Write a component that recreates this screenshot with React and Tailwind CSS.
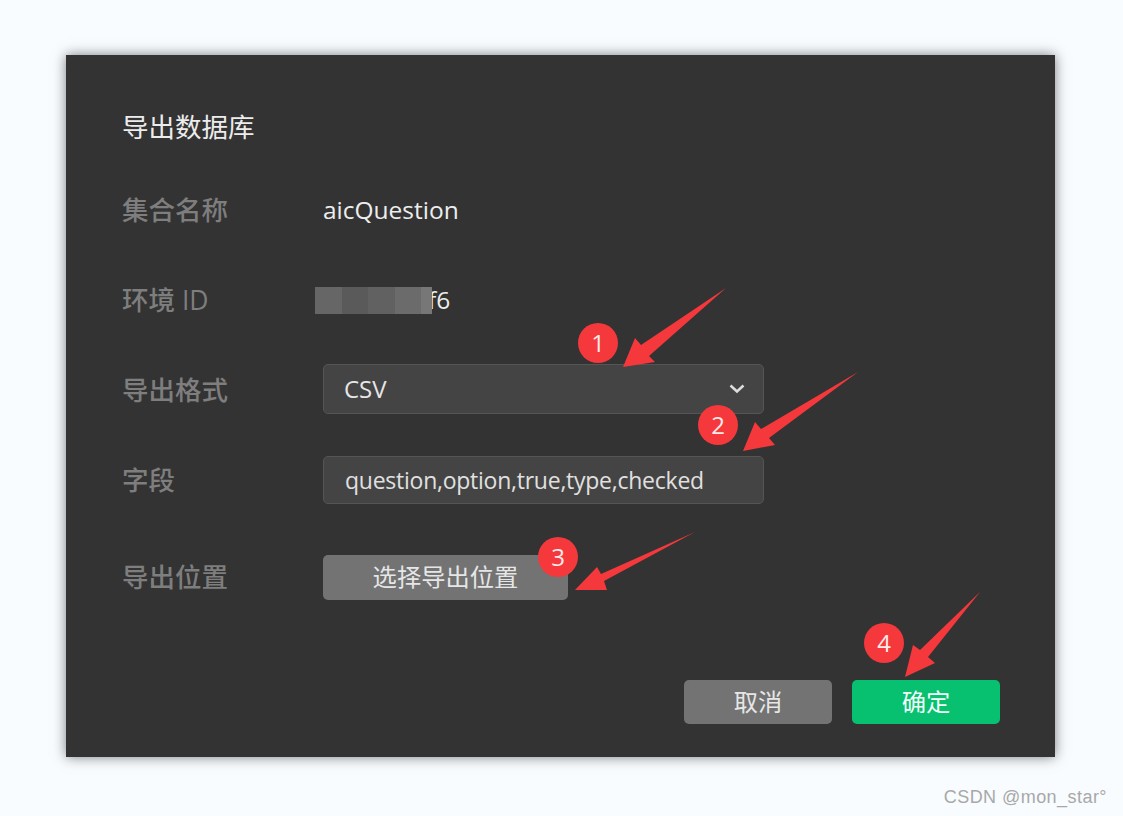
import React from "react";

function Row({ label, className = "", children }) {
  return (
    <div className={`flex items-center ${className}`}>
      <div className="w-[201px] shrink-0 text-[26.5px] leading-none font-medium text-[#7e7e7e]">{label}</div>
      {children}
    </div>
  );
}

function Badge({ n, className }) {
  return (
    <div className={`absolute flex h-10 w-10 items-center justify-center rounded-full bg-[#f5383b] text-[24px] leading-none text-[#fdeaea] ${className}`}>
      {n}
    </div>
  );
}

const arrows = [
  "726,288 649,356 655,362 623,367 635,338 641,345",
  "858,372 769,438 775,445 743,451 755,422 761,429",
  "695,532 604,581 607,590 575,590 597,567 601,574",
  "980,592 928,657 935,663 905,677 913,645 920,650",
];

export default function App() {
  return (
    <div className="relative flex h-[816px] w-full flex-col overflow-hidden bg-[#f8fcff] pl-[66px] pr-[16px] pt-[55px] font-['Open_Sans','Noto_Sans_CJK_SC',sans-serif]">
      <div className="flex h-[702px] w-[989px] flex-col bg-[#333333] pl-[56px] pr-[55px] pt-[59px] shadow-[0_0_12px_rgba(0,0,0,0.5)]">
        <h1 className="h-[26px] text-[26.5px] leading-[26px] font-normal text-[#ececec]">导出数据库</h1>
        <div className="mt-[45px] flex flex-col">
          <Row label="集合名称" className="h-[50px]">
            <span className="text-[24.5px] leading-none font-medium text-[#ededed]">aicQuestion</span>
          </Row>
          <Row label="环境 ID" className="mt-[40px] h-[50px]">
            <div className="-ml-[8px] flex items-center">
              <div className="relative z-10 flex h-[27px] w-[117px]">
                <div className="w-[27px] bg-[#666666]" />
                <div className="w-[26px] bg-[#5a5a5a]" />
                <div className="w-[27px] bg-[#616161]" />
                <div className="w-[26px] bg-[#6b6b6b]" />
                <div className="w-[11px] bg-[#777777]" />
              </div>
              <span className="-ml-[4px] text-[24.5px] leading-none font-medium text-[#ededed]">f6</span>
            </div>
          </Row>
          <Row label="导出格式" className="mt-[40px] h-[50px]">
            <div className="-mt-px mb-px flex h-[50px] w-[441px] items-center justify-between rounded-[5px] border border-[#555555] bg-[#444444] pl-[20px] pr-[18px] text-[24px] leading-none font-medium text-[#e6e6e6]">
              <span>CSV</span>
              <svg width="16" height="10" viewBox="0 0 16 10" fill="none" stroke="#dddddd" strokeWidth="2.5">
                <path d="M1.5 1.5 8 7.5l6.5-6" />
              </svg>
            </div>
          </Row>
          <Row label="字段" className="mt-[40px] h-[50px]">
            <div className="flex h-[48px] w-[441px] items-center rounded-[5px] border border-[#555555] bg-[#444444] pl-[21px] text-[23px] leading-none tracking-[-0.25px] whitespace-nowrap text-[#e0e0e0]">
              question,option,true,type,checked
            </div>
          </Row>
          <Row label="导出位置" className="mt-[47px] h-[50px]">
            <div className="flex h-[45px] w-[245px] items-center justify-center rounded-[5px] bg-[#737373] text-[24.3px] leading-none text-[#e6e6e6]">
              选择导出位置
            </div>
          </Row>
        </div>
        <div className="mt-[78px] flex justify-end gap-[20px]">
          <div className="flex h-[44px] w-[148px] items-center justify-center rounded-[5px] bg-[#737373] text-[24.3px] leading-none text-[#e6e6e6]">取消</div>
          <div className="flex h-[44px] w-[148px] items-center justify-center rounded-[5px] bg-[#07c070] text-[24.3px] leading-none text-[#f2fff9]">确定</div>
        </div>
      </div>

      <div className="mt-[30px] self-end font-['Liberation_Sans',sans-serif] text-[18px] leading-[20px] tracking-[0.45px] whitespace-nowrap text-[#a8a8a8]">
        CSDN @mon_star°
      </div>

      <svg className="pointer-events-none absolute left-0 top-0" width="1123" height="816" viewBox="0 0 1123 816">
        {arrows.map((p) => (
          <polygon key={p} points={p} fill="#f5383b" />
        ))}
      </svg>
      <Badge n="1" className="left-[578px] top-[323px]" />
      <Badge n="2" className="left-[698px] top-[405px]" />
      <Badge n="3" className="left-[538px] top-[537px]" />
      <Badge n="4" className="left-[864px] top-[623px]" />
    </div>
  );
}
